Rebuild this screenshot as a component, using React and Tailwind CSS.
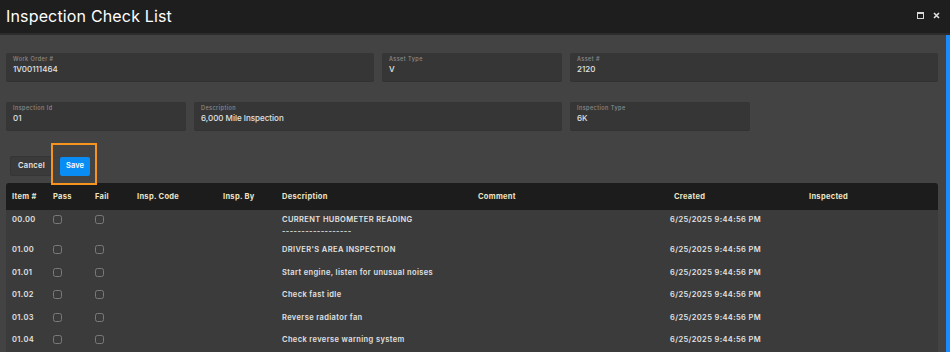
import { useState } from 'react';

const columns = [
  { key: 'item', label: 'Item #', w: 'w-[41px]' },
  { key: 'pass', label: 'Pass', w: 'w-[42px]' },
  { key: 'fail', label: 'Fail', w: 'w-[42px]' },
  { key: 'code', label: 'Insp. Code', w: 'w-[86px]' },
  { key: 'by', label: 'Insp. By', w: 'w-[59px]' },
  { key: 'desc', label: 'Description', w: 'w-[196px]' },
  { key: 'comment', label: 'Comment', w: 'w-[196px]' },
  { key: 'created', label: 'Created', w: 'w-[135px]' },
  { key: 'inspected', label: 'Inspected', w: 'flex-1' },
];

const rows = [
  { item: '00.00', desc: 'CURRENT HUBOMETER READING', extra: '------------------', created: '6/25/2025 9:44:56 PM' },
  { item: '01.00', desc: "DRIVER'S AREA INSPECTION", created: '6/25/2025 9:44:56 PM' },
  { item: '01.01', desc: 'Start engine, listen for unusual noises', created: '6/25/2025 9:44:56 PM' },
  { item: '01.02', desc: 'Check fast idle', created: '6/25/2025 9:44:56 PM' },
  { item: '01.03', desc: 'Reverse radiator fan', created: '6/25/2025 9:44:56 PM' },
  { item: '01.04', desc: 'Check reverse warning system', created: '6/25/2025 9:44:56 PM' },
];

function Field({ label, value, span }) {
  return (
    <div className={`${span} h-[28px] rounded-[2px] bg-[#363636] shadow-[0_1px_0_rgba(0,0,0,0.25)] px-[7px] pt-[2px]`}>
      <div className="text-[5.5px] leading-[8px] tracking-[0.08em] text-[#8c8c8c] font-medium">{label}</div>
      <div className="text-[8px] leading-[12px] text-[#e2e2e2] font-medium">{value}</div>
    </div>
  );
}

function Check({ checked, onClick }) {
  return (
    <button onClick={onClick}
      className={`block mt-[1px] w-[9px] h-[9px] rounded-[2.5px] border border-[#7a7a7a] ${checked ? 'bg-[#0a8cf5]' : 'bg-transparent'}`} />
  );
}

export default function App() {
  const [marks, setMarks] = useState({});
  const toggle = (item, k) => setMarks(m => ({ ...m, [item + k]: !m[item + k] }));

  return (
    <div className="w-[950px] h-[352px] overflow-hidden flex flex-col bg-[#434343] font-['Inter',sans-serif]">
      <div className="h-[35px] shrink-0 bg-[#1e1e1e] flex items-center justify-between pl-[6px] pr-[10px] border-b-2 border-[#2c2c2c]">
        <h1 className="text-[16px] text-white tracking-[0.01em] -mt-[2px]">Inspection Check List</h1>
        <div className="flex items-center gap-[9px] -mt-[2px]">
          <svg width="7" height="7" viewBox="0 0 7 7">
            <rect x="0.5" y="0.5" width="6" height="6" fill="none" stroke="#d8d8d8" strokeWidth="1" />
            <rect x="0.5" y="0.5" width="6" height="1.5" fill="#d8d8d8" />
          </svg>
          <svg width="7" height="7" viewBox="0 0 7 7">
            <path d="M1 1 L6 6 M6 1 L1 6" stroke="#e0e0e0" strokeWidth="1.6" />
          </svg>
        </div>
      </div>

      <div className="flex flex-1 min-h-0">
        <div className="flex-1 min-w-0 pl-[6px] pr-[8px] pt-[18px]">
          <div className="grid grid-cols-5 gap-x-[8px] gap-y-[21px]">
            <Field span="col-span-2" label="Work Order #" value="1V00111464" />
            <Field span="col-span-1" label="Asset Type" value="V" />
            <Field span="col-span-2" label="Asset #" value="2120" />
            <Field span="col-span-1" label="Inspection Id" value="01" />
            <Field span="col-span-2" label="Description" value="6,000 Mile Inspection" />
            <Field span="col-span-1" label="Inspection Type" value="6K" />
          </div>

          <div className="relative flex items-center gap-[7px] mt-[26px] pl-[4px] h-[20px]">
            <button className="h-[20px] px-[7px] rounded-[2px] bg-[#3a3a3a] border border-[#353535] text-[7.5px] font-semibold tracking-[0.04em] text-[#e6e6e6]">Cancel</button>
            <button className="h-[19px] w-[30px] rounded-[2px] bg-[#0a8cf5] text-[7.5px] font-semibold text-white">Save</button>
            <div className="absolute left-[45px] top-[-13px] w-[46px] h-[42px] border-2 border-[#f7941d] pointer-events-none" />
          </div>

          <div className="mt-[7px] rounded-t-[3px] overflow-hidden">
            <div className="flex h-[27px] items-center bg-[#1c1c1c]">
              {columns.map(c => (
                <div key={c.key} className={`${c.w} shrink-0 pl-[6px] text-[7.5px] font-bold tracking-[0.04em] text-[#ece4c4]`}>{c.label}</div>
              ))}
            </div>
            <div className="bg-[#3b3b3b]">
              {rows.map((r, i) => (
                <div key={r.item} className={`flex items-start pt-[4px] ${i === 0 ? 'h-[30px]' : 'h-[22.5px]'}`}>
                  <div className="w-[41px] shrink-0 pl-[6px] text-[7.5px] leading-[11px] font-semibold tracking-[0.05em] text-[#e2e2e2]">{r.item}</div>
                  <div className="w-[42px] shrink-0 pl-[6px] flex"><Check checked={marks[r.item + 'p']} onClick={() => toggle(r.item, 'p')} /></div>
                  <div className="w-[42px] shrink-0 pl-[6px] flex"><Check checked={marks[r.item + 'f']} onClick={() => toggle(r.item, 'f')} /></div>
                  <div className="w-[86px] shrink-0" />
                  <div className="w-[59px] shrink-0" />
                  <div className="w-[196px] shrink-0 pl-[6px] text-[7.5px] leading-[11px] font-semibold tracking-[0.05em] text-[#e2e2e2]">
                    <div>{r.desc}</div>
                    {r.extra && <div className="leading-[13px]">{r.extra}</div>}
                  </div>
                  <div className="w-[196px] shrink-0" />
                  <div className="w-[135px] shrink-0 pl-[2px] text-[7.5px] leading-[11px] font-semibold tracking-[0.05em] text-[#e2e2e2]">{r.created}</div>
                  <div className="flex-1" />
                </div>
              ))}
            </div>
          </div>
        </div>
        <div className="w-[4px] shrink-0 bg-[#1a8cff]" />
      </div>
    </div>
  );
}
